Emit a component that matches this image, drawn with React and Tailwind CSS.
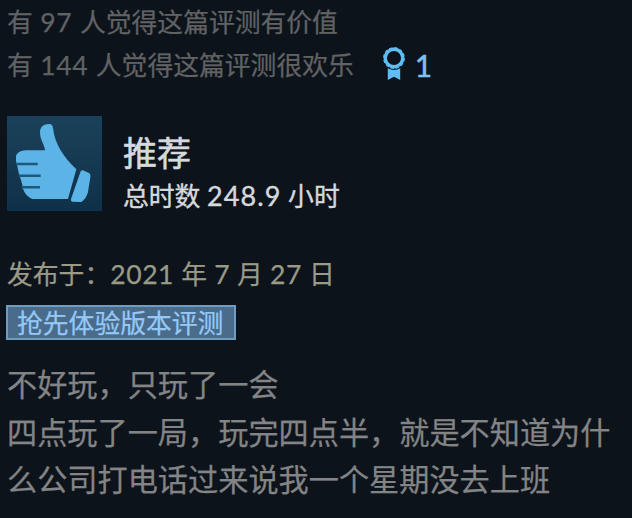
const REVIEW_LINES = [
  "不好玩，只玩了一会",
  "四点玩了一局，玩完四点半，就是不知道为什",
  "么公司打电话过来说我一个星期没去上班",
];

function ThumbsUp() {
  return (
    <svg viewBox="20 30 285 285" className="size-[95px] shrink-0" aria-hidden="true">
      <defs>
        <linearGradient id="thumb-bg" x1="0" y1="0" x2="0" y2="1">
          <stop offset="0" stopColor="#1b425a" />
          <stop offset="1" stopColor="#0f3049" />
        </linearGradient>
      </defs>
      <rect x="20" y="30" width="285" height="285" fill="url(#thumb-bg)" />
      <path
        fill="#5bb3e6"
        d="M134 133C133 116 119 103 119 79C119 62 130 54 146 54C156 54 158 61 159 73C164 111 188 153 228 190L203 279H96C83 274 73 262 68 249L66 236L60 216L55 200L51 181L47 166V151C50 139 62 134 76 133Z"
      />
      <path
        fill="#5bb3e6"
        d="M240 199C242 193 246 192 251 194L266 201C270 203 271 208 270 214L263 258C260 271 253 281 243 288L216 287C212 286 211 283 212 279Z"
      />
      <path
        d="M48 174H112M56 209H121M64 244H119"
        stroke="#1d587d"
        strokeWidth="7.5"
        fill="none"
      />
    </svg>
  );
}

function AwardIcon() {
  return (
    <svg viewBox="0 0 22 34" className="h-[34px] w-[22px]" aria-hidden="true">
      <circle cx="11" cy="11" r="8.7" fill="none" stroke="#5fbdf2" strokeWidth="3.4" />
      <circle
        cx="11"
        cy="11"
        r="10.3"
        fill="none"
        stroke="#5fbdf2"
        strokeWidth="1.2"
        strokeDasharray="3.6 1.79"
      />
      <path fill="#5fbdf2" d="M4.8 21.3Q11 24.6 17.2 21.3V33L11 29.8L4.8 33Z" />
    </svg>
  );
}

export default function App() {
  return (
    <main className="h-[518px] w-[632px] overflow-hidden bg-[#0d131b] pt-px pl-[7px] font-[Lato,'Noto_Sans_CJK_SC',sans-serif] whitespace-nowrap [-webkit-text-stroke:0.25px]">
      <div className="text-[25.8px] leading-[43px] text-[#616263] [word-spacing:0.8px]">
        <p>
          有 <span className="text-[26.5px] tracking-[0.8px]">97</span> 人觉得这篇评测有价值
        </p>
        <div className="flex">
          <p>
            有 <span className="text-[26.5px] tracking-[0.7px]">144</span> 人觉得这篇评测很欢乐
          </p>
          <div className="ml-[29px] flex items-start text-[#7cc0f4]">
            <div className="pt-[3px]">
              <AwardIcon />
            </div>
            <span className="ml-2.5 text-[30px] [-webkit-text-stroke:0.5px]">1</span>
          </div>
        </div>
      </div>

      <div className="mt-[29px] flex text-[#d5d9de]">
        <ThumbsUp />
        <div className="ml-[21px] pt-[15px]">
          <h1 className="text-[34px] leading-[44px] [-webkit-text-stroke:0.6px]">推荐</h1>
          <p className="text-[25.8px] leading-[42px] [-webkit-text-stroke:0.4px]">
            总时数 <span className="text-[27px] tracking-[1.1px]">248.9</span> 小时
          </p>
        </div>
      </div>

      <p className="mt-[36px] text-[25.8px] leading-[43px] text-[#9a9a87] [word-spacing:0.6px]">
        发布于：<span className="text-[26.5px] tracking-[0.6px]">2021</span> 年{" "}
        <span className="text-[26.5px]">7</span> 月{" "}
        <span className="text-[26.5px] tracking-[0.6px]">27</span> 日
      </p>

      <div className="mt-[9px] -ml-px flex h-[35px] w-[230px] items-center border-2 border-[#6f9cc2] bg-[#4b6b8b] pt-px pl-[9px] text-[25.8px] leading-[31px] text-[#94c9f7]">
        抢先体验版本评测
      </div>

      <div className="mt-[21px] text-[30.18px] leading-[47.5px] text-[#838485]">
        {REVIEW_LINES.map((line) => (
          <p key={line}>{line}</p>
        ))}
      </div>
    </main>
  );
}
